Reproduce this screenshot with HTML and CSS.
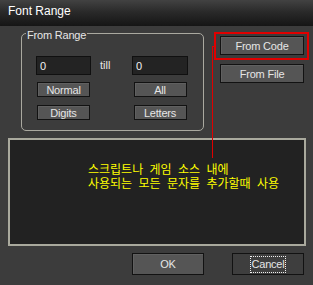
FILE: index.html
```html
<!DOCTYPE html>
<html lang="ko">
<head>
    <meta charset="UTF-8">
    <title>Font Range</title>
    <link rel="stylesheet" href="styles.css">
</head>
<body>
    <div class="dialog">
        <div class="titlebar">Font Range</div>

        <div class="top">
            <fieldset class="range">
                <legend>From Range</legend>
                <div class="range-grid">
                    <input class="field" type="text" value="0">
                    <span class="till">till</span>
                    <input class="field" type="text" value="0">
                    <button class="btn small">Normal</button>
                    <span></span>
                    <button class="btn small">All</button>
                    <button class="btn small">Digits</button>
                    <span></span>
                    <button class="btn small">Letters</button>
                </div>
            </fieldset>

            <div class="side">
                <button class="btn side-btn">From Code</button>
                <button class="btn side-btn">From File</button>
            </div>
        </div>

        <div class="output">
            <p>스크립트나 게임 소스 내에<br>사용되는 모든 문자를 추가할때 사용</p>
        </div>

        <div class="actions">
            <button class="btn action">OK</button>
            <button class="btn action cancel"><span class="focus">Cancel</span></button>
        </div>

        <div class="callout-box"></div>
        <div class="callout-line"></div>
    </div>
</body>
</html>
```

FILE: styles.css
```css
body {
    margin: 0;
    background-color: #3c3c3c;
    font-family: "Liberation Sans", Arial, sans-serif;
    font-size: 11px;
    color: #e6e6e6;
}

.dialog {
    position: relative;
    width: 313px;
    height: 285px;
}

.titlebar {
    height: 26px;
    box-sizing: border-box;
    padding: 4px 0 0 8px;
    line-height: 14px;
    font-size: 12px;
    color: #fff;
    background: linear-gradient(#424242, #2a2a2a 45%, #151515);
}

.top {
    display: flex;
    align-items: flex-start;
    padding-left: 21px;
}

.range {
    margin: -1px 0 0 0;
    width: 183px;
    box-sizing: border-box;
    padding: 15px 0 11px 14px;
    border: 1px solid #aaa9a0;
    border-radius: 5px;
}

.range legend {
    margin-left: -10px;
    padding: 4px 1px 0;
    line-height: 12px;
    letter-spacing: -0.2px;
}

.range-grid {
    display: grid;
    grid-template-columns: 55px 41px 56px;
    grid-template-rows: 19px 15px 15px;
    row-gap: 7px;
    align-items: center;
}

.range-grid .small:nth-child(n+7) {
    margin-top: 2px;
}

.field {
    width: 55px;
    height: 19px;
    box-sizing: border-box;
    margin: 0;
    padding: 0 3px;
    border: 1px solid #101010;
    background-color: #232323;
    color: #f0f0f0;
    font: 11px "Liberation Sans", Arial, sans-serif;
    outline: none;
}

.range-grid .field:nth-child(3) {
    width: 56px;
}

.till {
    padding-left: 9px;
    line-height: 19px;
}

.btn {
    margin: 0;
    padding: 0;
    box-sizing: border-box;
    border: 1px solid #121212;
    background-color: #555;
    color: #e6e6e6;
    font: 11px "Liberation Sans", Arial, sans-serif;
    letter-spacing: -0.2px;
    box-shadow: inset 1px 1px 0 #606060;
}

.small {
    width: 53px;
    height: 15px;
    line-height: 12px;
    justify-self: center;
}

.side {
    display: flex;
    flex-direction: column;
    gap: 9px;
    margin: 10px 0 0 16px;
}

.side-btn {
    width: 84px;
    height: 19px;
}

.output {
    width: 298px;
    height: 108px;
    box-sizing: border-box;
    margin: 7px 0 0 8px;
    border: 2px solid #a9a99d;
    background-color: #222;
}

.output p {
    margin: 0;
    padding: 22px 0 0 78px;
    font-family: "Noto Sans CJK KR", sans-serif;
    font-size: 12px;
    line-height: 14px;
    word-spacing: 3px;
    color: #ffff00;
}

.actions {
    display: flex;
    justify-content: flex-end;
    gap: 28px;
    margin-top: 7px;
    padding-right: 9px;
}

.action {
    width: 72px;
    height: 22px;
}

.cancel {
    background-color: #3e3e3e;
    box-shadow: none;
}

.focus {
    display: inline-block;
    padding: 1px 0;
    line-height: 13px;
    border: 1px dotted #f0f0f0;
}

.callout-box {
    position: absolute;
    left: 214px;
    top: 32px;
    width: 95px;
    height: 28px;
    box-sizing: border-box;
    border: 2px solid #e00000;
}

.callout-line {
    position: absolute;
    left: 212px;
    top: 46px;
    width: 2px;
    height: 112px;
    box-sizing: border-box;
    border-left: 1px solid #e00000;
    border-top: 1px solid #e00000;
}
```
